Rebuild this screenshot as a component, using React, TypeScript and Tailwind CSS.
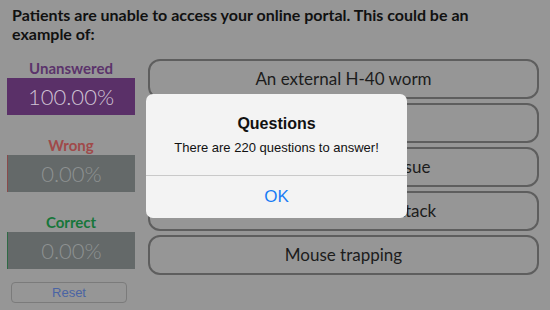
import React from 'react'

const answers = [
    'An external H-40 worm',
    'A phishing scam',
    'An internal server issue',
    'A denial of service attack',
    'Mouse trapping',
]

const Stat = ({ label, value, labelClass, boxClass, valueClass }: { label: string; value: string; labelClass: string; boxClass: string; valueClass: string }) => (
    <div className="flex flex-col items-center">
        <div className={`h-[20px] text-[15px] font-bold leading-[20px] ${labelClass}`}>{label}</div>
        <div className={`flex h-[37px] w-[128px] items-center justify-center text-[22px] font-light ${boxClass} ${valueClass}`}>
            {value}
        </div>
    </div>
)

const App = () => {
    return (
        <div className="relative h-[310px] w-[550px] overflow-hidden bg-[#969696] font-['Lato',sans-serif]">
            <h1 className="h-[57px] w-[510px] px-[12px] pt-[5px] text-[16px] font-bold leading-[19px] text-[#111]">
                Patients are unable to access your online portal. This could be an example of:
            </h1>

            <div className="flex">
                <div className="ml-[7px] flex w-[128px] flex-col gap-[20px] pt-[1px]">
                    <Stat label="Unanswered" value="100.00%" labelClass="text-[#5b336b]" boxClass="bg-[#5a3068]" valueClass="text-[#cfc3d4]" />
                    <Stat label="Wrong" value="0.00%" labelClass="text-[#a04a4a]" boxClass="bg-[#646969] border-l border-[#8a4a4a]" valueClass="text-[#8e9292]" />
                    <Stat label="Correct" value="0.00%" labelClass="text-[#17763a]" boxClass="bg-[#646969] border-l border-[#2f6a45]" valueClass="text-[#8e9292]" />
                    <button className="-mt-[7px] ml-[4px] h-[21px] w-[116px] rounded-[4px] border border-[#7b7b7b] font-['Liberation_Sans',sans-serif] text-[13px] text-[#4a64a4]">
                        Reset
                    </button>
                </div>

                <div className="ml-[13px] mt-[2px] flex w-[391px] flex-col gap-[4px]">
                    {answers.map((a) => (
                        <div key={a} className="flex h-[40px] items-center justify-center rounded-[12px] border-2 border-[#5e5e5e] text-[17px] text-[#1c1c1c]">
                            {a}
                        </div>
                    ))}
                </div>
            </div>

            <div className="absolute left-[146px] top-[94px] flex h-[124px] w-[261px] flex-col overflow-hidden rounded-[7px] bg-[#f3f3f3] font-['Liberation_Sans',sans-serif]">
                <div className="flex h-[81px] flex-col items-center pt-[20px]">
                    <div className="text-[16px] font-bold leading-[20px] text-[#111]">Questions</div>
                    <div className="mt-[6px] text-[13px] leading-[16px] text-[#111]">There are 220 questions to answer!</div>
                </div>
                <div className="h-px bg-[#c9c9c9]" />
                <div className="flex flex-1 items-center justify-center text-[17px] text-[#1a7cf5]">OK</div>
            </div>
        </div>
    )
}

export default App
